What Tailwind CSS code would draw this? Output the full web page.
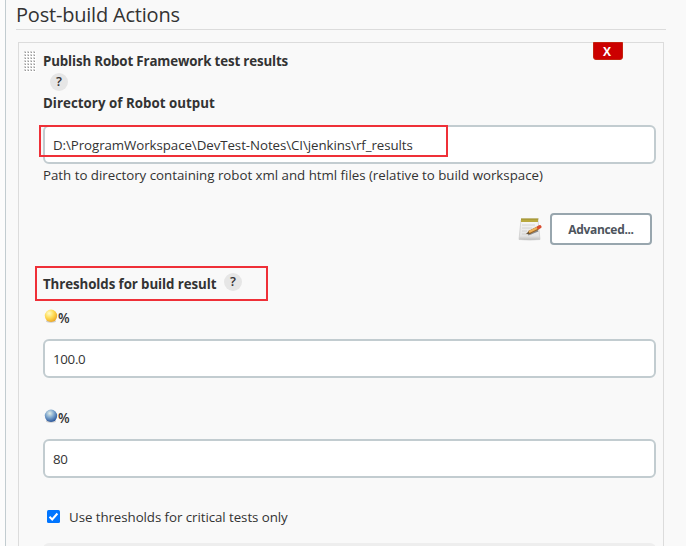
<!DOCTYPE html>
<html lang="en">
<head>
<meta charset="utf-8">
<title>Post-build Actions</title>
<script src="https://cdn.jsdelivr.net/npm/@tailwindcss/browser@4"></script>
</head>
<body class="h-[546px] w-[686px] overflow-hidden bg-[#fcfcfc] pl-[5px] font-['Open_Sans','Noto_Sans',sans-serif] text-[13.3px] text-[#333]">
<main class="h-[546px] border-l border-[#c2ccd0] bg-[#f9f9f9] pl-[10px]">
  <h1 class="h-[30px] w-[650px] border-b border-[#dcdcdc] text-[20px] leading-[30px] whitespace-nowrap"><span class="tracking-[-0.2px]">Post-build Actions</span></h1>
  <section class="relative mt-3 ml-[2px] h-[520px] w-[646px] border border-[#dcdcdc] pr-[7px] pl-6">
    <svg class="absolute top-2 left-[5px]" width="12" height="21" viewBox="0 0 12 21">
      <defs><pattern id="grip" width="3" height="3" patternUnits="userSpaceOnUse"><rect width="3" height="3" fill="#fff"/><rect width="2" height="2" fill="#d5d5d5"/><rect x="1" y="1" width="1" height="1" fill="#999"/></pattern></defs>
      <rect width="12" height="21" fill="url(#grip)"/>
    </svg>
    <button class="absolute -top-px left-[574px] h-[18px] w-[30px] rounded-b-[3px] border border-[#c4240f] bg-[#cc0000] text-[12px] leading-[17px] font-bold text-white"><span class="relative -left-px">X</span></button>

    <h2 class="h-[30px] pt-2 leading-5 font-bold whitespace-nowrap"><span class="tracking-[-0.14px]">Publish Robot Framework test results</span></h2>
    <div class="ml-[7px] flex size-[18px] items-center justify-center rounded-full bg-[#e6e6e6] text-[13px] font-semibold">?</div>
    <div class="mt-[2px] h-[32px] leading-5 font-bold whitespace-nowrap"><span class="tracking-[0.03px]">Directory of Robot output</span></div>
    <div class="relative flex h-[39px] w-[613px] items-center rounded-md border-2 border-[#c2ccd0] bg-white pt-[2px] pl-2 whitespace-nowrap">
      <span class="tracking-[-0.07px]">D:\ProgramWorkspace\DevTest-Notes\CI\jenkins\rf_results</span>
      <div class="absolute -top-[2px] -left-[6px] h-[32px] w-[409px] border-2 border-[#ef3038]"></div>
    </div>
    <p class="h-[49px] pt-[1px] leading-5 whitespace-nowrap"><span class="tracking-[-0.015px]">Path to directory containing robot xml and html files (relative to build workspace)</span></p>
    <div class="flex h-8 items-center justify-end gap-2 pr-1">
      <svg width="24" height="24" viewBox="0 0 24 24">
        <defs>
          <linearGradient id="paper" x1="0" y1="0" x2="0" y2="1"><stop offset="0" stop-color="#f8f8f8"/><stop offset=".8" stop-color="#e3e3e3"/><stop offset="1" stop-color="#bcbcbc"/></linearGradient>
        </defs>
        <path d="M3 3h17l2 19.5q-10 1-21 0z" fill="url(#paper)" stroke="#cacaca" stroke-width=".7"/>
        <path d="M3 1.5h17V5H3z" fill="#b9a93f"/><path d="M3.5 2h17" stroke="#82772b" stroke-dasharray="1 1"/>
        <path d="M4 8h13M4 11h10M4 14h5M4 17h10" stroke="#ccc" stroke-width=".8"/>
        <path d="M10 17.5l10-4" stroke="#888" stroke-width="2"/>
        <path d="M8 17l3-3 2 3z" fill="#6b5537"/>
        <path d="M11 15.5l9-4.5" stroke="#9b6526" stroke-width="3.6"/><path d="M11 15l9-4.5" stroke="#eeb25c" stroke-width="2"/>
        <path d="M20.5 10.5l1.3-.7" stroke="#d94c2e" stroke-width="3.4" stroke-linecap="round"/>
      </svg>
      <button class="h-8 w-[102px] rounded border-2 border-[#98a6ae] bg-white pt-px text-[12px] font-bold text-[#4d545d]"><span class="tracking-[-0.32px]">Advanced...</span></button>
    </div>
    <div class="relative mt-[29px] flex h-5 items-center pt-[2px] font-bold whitespace-nowrap">
      <span class="tracking-[-0.08px]">Thresholds for build result</span>
      <div class="absolute -top-[1px] left-[181px] flex size-[18px] items-center justify-center rounded-full bg-[#e6e6e6] text-[13px] font-semibold">?</div>
      <div class="absolute -top-[8px] -left-2 h-[35px] w-[233px] border-2 border-[#ef3038]"></div>
    </div>
    <div class="mt-[13px] flex h-5 items-center font-semibold">
      <svg class="-mt-[2px] ml-[1px]" width="14" height="14" viewBox="0 0 14 14"><defs><radialGradient id="yellow" cx=".35" cy=".3" r=".75"><stop offset="0" stop-color="#fffcc8"/><stop offset=".5" stop-color="#ffdc57"/><stop offset="1" stop-color="#eba524"/></radialGradient></defs><ellipse cx="7" cy="12.3" rx="5" ry="1.4" fill="#ccc"/><circle cx="7" cy="6.8" r="6.2" fill="url(#yellow)"/></svg>
      <span class="pt-[2px] text-[13.5px]">%</span>
    </div>
    <div class="mt-3 flex h-[39px] w-[613px] items-center rounded-md border-2 border-[#c2ccd0] bg-white pt-[2px] pl-2"><span class="tracking-[-0.3px]">100.0</span></div>
    <div class="mt-[29px] flex h-5 items-center font-semibold">
      <svg class="-mt-[2px] ml-[1px]" width="14" height="14" viewBox="0 0 14 14"><defs><radialGradient id="blue" cx=".4" cy=".3" r=".7"><stop offset="0" stop-color="#e3eee9"/><stop offset=".5" stop-color="#7ea6cd"/><stop offset="1" stop-color="#2d589c"/></radialGradient></defs><ellipse cx="7" cy="12.3" rx="5" ry="1.4" fill="#ccc"/><circle cx="7" cy="6.8" r="6.2" fill="url(#blue)"/></svg>
      <span class="pt-[2px] text-[13.5px]">%</span>
    </div>
    <div class="mt-3 flex h-[39px] w-[613px] items-center rounded-md border-2 border-[#c2ccd0] bg-white pt-[2px] pl-2"><span class="tracking-[-0.3px]">80</span></div>
    <label class="mt-[29px] flex h-5 items-center pl-1 whitespace-nowrap">
      <svg class="-mt-[1px] mr-[9px]" width="13" height="13" viewBox="0 0 13 13"><rect width="13" height="13" rx="1.5" fill="#0075ff"/><path d="M2.5 6.8l2.7 2.7 5.2-6" fill="none" stroke="#fff" stroke-width="2"/></svg>
      <span class="pt-[2px] tracking-[-0.06px]">Use thresholds for critical tests only</span>
    </label>
    <div class="mt-[16px] h-5 w-[613px] rounded-md bg-[#eee]"></div>
  </section>
</main>
</body>
</html>
